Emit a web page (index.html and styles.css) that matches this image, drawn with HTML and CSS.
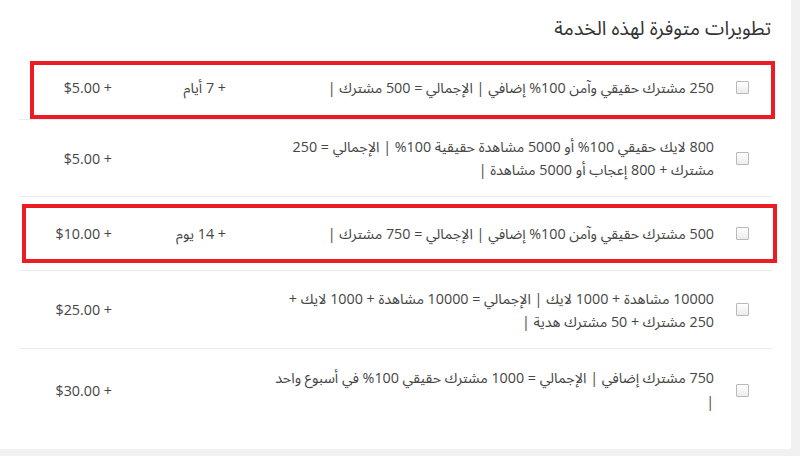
FILE: index.html
```html
<!DOCTYPE html>
<html lang="ar">
<head>
<meta charset="utf-8">
<title>تطويرات متوفرة لهذه الخدمة</title>
<link rel="stylesheet" href="styles.css">
</head>
<body>
<div class="card" dir="rtl">
  <h2 class="title">تطويرات متوفرة لهذه الخدمة</h2>
  <div class="rows">
    <div class="row row-first">
      <span class="check"></span>
      <div class="desc">250 مشترك حقيقي وآمن 100% إضافي | الإجمالي = 500 مشترك |</div>
      <div class="dur">+ 7 أيام</div>
      <div class="price">+ $5.00</div>
      <span class="mark mark-1"></span>
    </div>
    <div class="row">
      <span class="check"></span>
      <div class="desc">800 لايك حقيقي 100% أو 5000 مشاهدة حقيقية 100% | الإجمالي = 250 مشترك + 800 إعجاب أو 5000 مشاهدة |</div>
      <div class="dur"></div>
      <div class="price">+ $5.00</div>
    </div>
    <div class="row row-short">
      <span class="check"></span>
      <div class="desc">500 مشترك حقيقي وآمن 100% إضافي | الإجمالي = 750 مشترك |</div>
      <div class="dur">+ 14 يوم</div>
      <div class="price">+ $10.00</div>
      <span class="mark mark-2"></span>
    </div>
    <div class="row row-tall">
      <span class="check"></span>
      <div class="desc">10000 مشاهدة + 1000 لايك | الإجمالي = 10000 مشاهدة + 1000 لايك + 250 مشترك + 50 مشترك هدية |</div>
      <div class="dur"></div>
      <div class="price">+ $25.00</div>
    </div>
    <div class="row row-last">
      <span class="check"></span>
      <div class="desc desc-narrow">750 مشترك إضافي | الإجمالي = 1000 مشترك حقيقي 100% في أسبوع واحد |</div>
      <div class="dur"></div>
      <div class="price">+ $30.00</div>
    </div>
  </div>
</div>
</body>
</html>
```
FILE: styles.css
```css
html, body {
  margin: 0;
  padding: 0;
}
body {
  background: #f1f1f1;
  width: 800px;
  height: 456px;
  overflow: hidden;
  font-family: "Open Sans", "Noto Sans Arabic", "Noto Sans", "DejaVu Sans", sans-serif;
  color: #454545;
}
.card {
  direction: rtl;
  width: 753px;
  height: 449px;
  margin: 0 auto 0 0;
  padding: 0 19px;
  background: #ffffff;
  position: relative;
}
.title {
  margin: 0;
  padding: 15px 1px 0 0;
  height: 26px;
  font-size: 19.5px;
  line-height: 26px;
  font-weight: 400;
  color: #333;
}
.rows {
  display: flex;
  flex-direction: column;
}
.row {
  position: relative;
  display: flex;
  align-items: center;
  min-height: 76px;
  border-bottom: 1px solid #ebebf1;
  padding-right: 23px;
  font-size: 14.3px;
  line-height: 23px;
}
.row-first {
  min-height: 63px;
  padding-top: 15px;
}
.row-short {
  min-height: 73px;
}
.row-tall {
  min-height: 77px;
}
.row-last {
  border-bottom: none;
  min-height: 82px;
}
.row-last .desc {
  line-height: 24px;
}
.check {
  flex: none;
  width: 11px;
  height: 11px;
  border: 1px solid #b9b9b9;
  border-radius: 1px;
  background: linear-gradient(#ffffff, #ececec);
  margin-left: 22px;
}
.desc {
  flex: none;
  width: 444px;
}
.desc-narrow {
  letter-spacing: -0.2px;
}
.dur {
  flex: none;
  width: 158px;
  padding-right: 44px;
  box-sizing: border-box;
}
.price {
  flex: 1;
}
.mark {
  position: absolute;
  border: 4px solid #ec1c24;
  pointer-events: none;
}
.mark-1 {
  top: 20px;
  left: 11px;
  right: -3px;
  bottom: 0;
}
.mark-2 {
  top: 7px;
  left: 3px;
  right: -5px;
  bottom: 7px;
}
```
